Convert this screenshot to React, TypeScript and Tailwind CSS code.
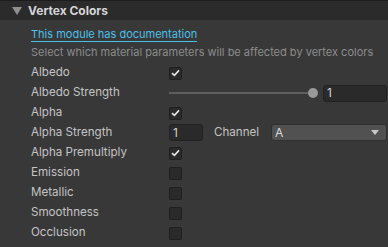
import React from "react";

const font = { fontFamily: "Inter, 'Noto Sans', sans-serif" };

function Check({ on }: { on?: boolean }) {
  return (
    <div className="w-[13px] h-[13px] rounded-[2px] bg-[#2a2a2a] border border-[#1f1f1f] flex items-center justify-center">
      {on && (
        <svg width="9" height="8" viewBox="0 0 9 8">
          <path d="M1 4.2 L3.4 6.4 L8 1.4" fill="none" stroke="#e4e4e4" strokeWidth="1.6" />
        </svg>
      )}
    </div>
  );
}

function Row({ label, children }: { label: string; children?: React.ReactNode }) {
  return (
    <div className="h-[20px] flex items-center">
      <div className="w-[138px] shrink-0 text-[11.6px] text-[#c4c4c4]">{label}</div>
      <div className="flex-1 flex items-center">{children}</div>
    </div>
  );
}

export default function App() {
  return (
    <div className="w-[388px] h-[247px] bg-[#383838] overflow-hidden" style={font}>
      <div className="h-[20px] bg-[#2b2b2b] border-t border-[#1c1c1c] flex items-center">
        <svg className="ml-[12px]" width="10" height="8" viewBox="0 0 10 8">
          <path d="M0 0 H10 L5 8 Z" fill="#8f8f8f" />
        </svg>
        <span className="ml-[6px] text-[12px] font-bold text-[#d6d6d6]">Vertex Colors</span>
      </div>
      <div className="pl-[31px] pr-[1px]">
        <div className="h-[22px] flex items-end">
          <span className="text-[11px] text-[#4cc1ea] border-b border-[#4cc1ea] leading-[14px]">
            This module has documentation
          </span>
        </div>
        <div className="h-[21px] flex items-center text-[11px] text-[#8c8c8c] whitespace-nowrap">
          Select which material parameters will be affected by vertex colors
        </div>
        <Row label="Albedo">
          <Check on />
        </Row>
        <Row label="Albedo Strength">
          <div className="relative w-[148px] h-[20px] flex items-center">
            <div className="h-[2px] w-[144px] bg-[#5e5e5e]" />
            <div className="absolute left-[139px] top-[5px] w-[10px] h-[10px] rounded-full bg-[#999999]" />
          </div>
          <div className="ml-[6px] flex-1 h-[17px] rounded-[3px] bg-[#2a2a2a] border border-[#212121] text-[12px] text-[#d2d2d2] pl-[3px] flex items-center">
            1
          </div>
        </Row>
        <Row label="Alpha">
          <Check on />
        </Row>
        <Row label="Alpha Strength">
          <div className="w-[34px] h-[17px] rounded-[3px] bg-[#2a2a2a] border border-[#212121] text-[12px] text-[#d2d2d2] pl-[3px] flex items-center">
            1
          </div>
          <span className="ml-[11px] w-[57px] text-[11.6px] text-[#c4c4c4]">Channel</span>
          <div className="flex-1 h-[17px] rounded-[3px] bg-[#515151] border border-[#303030] flex items-center justify-between pl-[3px] pr-[7px] text-[12px] text-[#dadada]">
            <span>A</span>
            <svg width="8" height="5" viewBox="0 0 8 5">
              <path d="M0 0 H8 L4 5 Z" fill="#c8c8c8" />
            </svg>
          </div>
        </Row>
        <Row label="Alpha Premultiply">
          <Check on />
        </Row>
        <Row label="Emission">
          <Check />
        </Row>
        <Row label="Metallic">
          <Check />
        </Row>
        <Row label="Smoothness">
          <Check />
        </Row>
        <Row label="Occlusion">
          <Check />
        </Row>
      </div>
    </div>
  );
}
